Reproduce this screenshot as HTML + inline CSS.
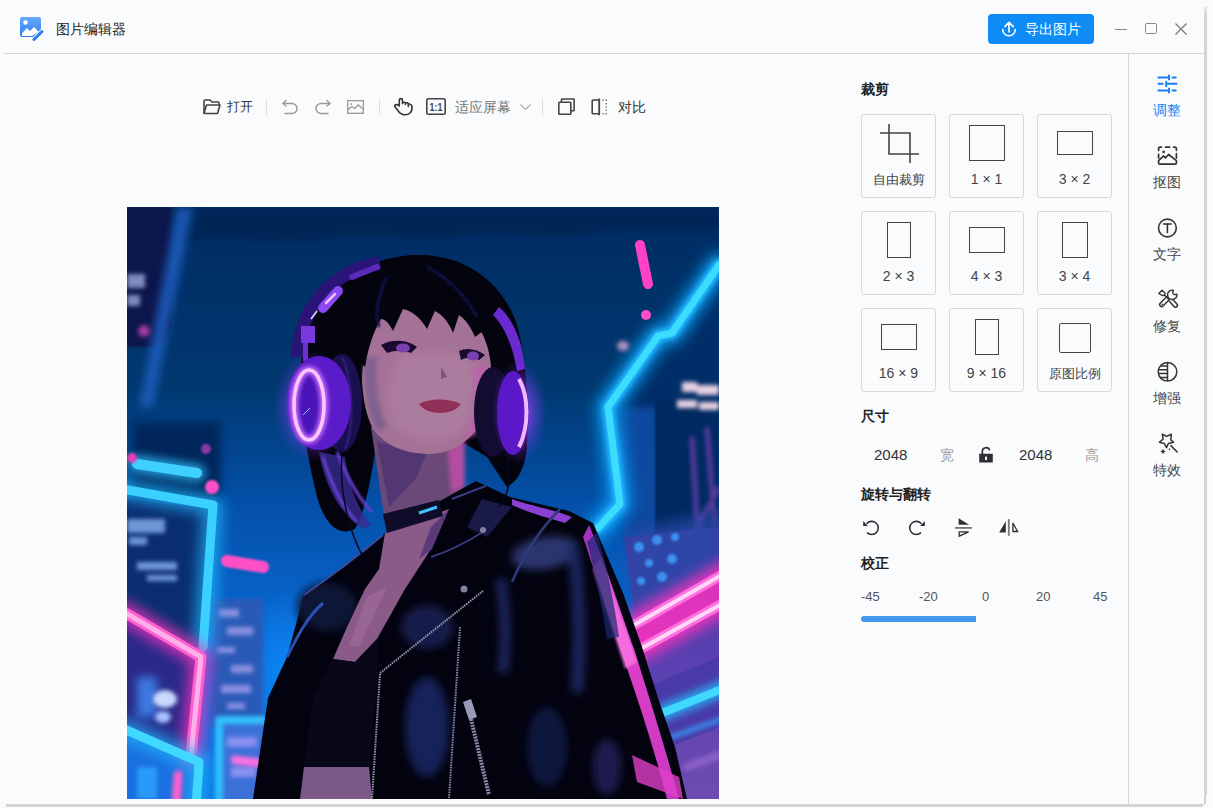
<!DOCTYPE html>
<html><head><meta charset="utf-8">
<style>
*{margin:0;padding:0;box-sizing:border-box}
html,body{width:1213px;height:808px;overflow:hidden;background:#f9fbfd;font-family:"Liberation Sans",sans-serif;color:#333}
.a{position:absolute}
.t{position:absolute;white-space:nowrap;line-height:1}
svg{position:absolute;overflow:visible}
.card{position:absolute;width:75px;height:84px;border:1px solid #d9dadc;border-radius:3px;background:#f9fbfd}
.lbl{position:absolute;left:0;width:73px;text-align:center;font-size:13px;line-height:1;color:#444;top:58px}
.sb{position:absolute;left:1129px;width:75px;text-align:center;font-size:14px;line-height:1;color:#444}
</style></head><body>
<!-- window shadow -->
<div class="a" style="left:1204px;top:7px;width:3px;height:6px;background:#e2e2e2"></div>
<div class="a" style="left:1204px;top:13px;width:3px;height:782px;background:#d3d3d3"></div>
<div class="a" style="left:1204px;top:795px;width:2px;height:9px;background:#d3d3d3"></div>
<div class="a" style="left:6px;top:804px;width:1196px;height:3px;background:#d3d3d3"></div>
<div class="a" style="left:1202px;top:804px;width:2px;height:2px;background:#dcdcdc"></div>
<div class="a" style="left:1207px;top:0;width:6px;height:808px;background:#f9fbfd"></div>
<!-- header -->
<div class="a" style="left:4px;top:53px;width:1200px;height:1px;background:#d5d5d6"></div>
<svg style="left:19px;top:16px" width="26" height="26" viewBox="0 0 26 26">
 <defs><linearGradient id="lg" x1="0" y1="0" x2="0" y2="1"><stop offset="0" stop-color="#6aaaf8"/><stop offset="1" stop-color="#2b7cf0"/></linearGradient></defs>
 <path d="M3 1h17a2 2 0 0 1 2 2v10l-8 8H3a2 2 0 0 1-2-2V3a2 2 0 0 1 2-2z" fill="url(#lg)"/>
 <circle cx="6.5" cy="6.5" r="2.2" fill="#fff"/>
 <path d="M3 17l5-5 3 3 4-4 4 4v1l-6 4H3z" fill="#fff"/>
 <path d="M15 23.5l8-8" stroke="#2b7cf0" stroke-width="3" stroke-linecap="round"/>
</svg>
<div class="t" style="left:56px;top:22px;font-size:14px;color:#222">图片编辑器</div>
<div class="a" style="left:988px;top:14px;width:106px;height:30px;background:#0f8bf6;border-radius:4px"></div>
<svg style="left:1002px;top:21px" width="14" height="16" viewBox="0 0 14 16" fill="none" stroke="#fff" stroke-width="1.6" stroke-linecap="round" stroke-linejoin="round">
 <path d="M0.7 8.5A6.3 6.3 0 0 0 13.3 8.5"/><path d="M7 11V1.5M2.8 5.6L7 1.4 11.2 5.6"/>
</svg>
<div class="t" style="left:1025px;top:22px;font-size:14px;color:#fff">导出图片</div>
<div class="a" style="left:1115px;top:28.5px;width:12px;height:1.4px;background:#8a8a8a"></div>
<div class="a" style="left:1145px;top:23px;width:12px;height:11px;border:1.4px solid #8a8a8a;border-radius:1.5px"></div>
<svg style="left:1175px;top:23px" width="12" height="12" viewBox="0 0 12 12" stroke="#7a7a7a" stroke-width="1.3"><path d="M0.5 0.5l11 11M11.5 0.5l-11 11"/></svg>

<!-- toolbar -->
<svg style="left:203px;top:99px" width="18" height="16" viewBox="0 0 18 16" fill="none" stroke="#444" stroke-width="1.6" stroke-linejoin="round">
 <path d="M1 14.5V2a1 1 0 0 1 1-1h5l2 2h6a1 1 0 0 1 1 1v2"/><path d="M1 14.5l2.5-8.5H17l-2.5 8.5z"/>
</svg>
<div class="t" style="left:227px;top:100px;font-size:13px;color:#333">打开</div>
<div class="a" style="left:266px;top:99px;width:1px;height:16px;background:#dcdcdc"></div>
<svg style="left:282px;top:100px" width="16" height="14" viewBox="0 0 16 14" fill="none" stroke="#999" stroke-width="1.4" stroke-linecap="round" stroke-linejoin="round">
 <path d="M3 13.5h7a5 5 0 0 0 0-10H1"/><path d="M4 0.5L1 3.5 4 6"/>
</svg>
<svg style="left:315px;top:100px" width="16" height="14" viewBox="0 0 16 14" fill="none" stroke="#999" stroke-width="1.4" stroke-linecap="round" stroke-linejoin="round">
 <path d="M13 13.5H6a5 5 0 0 1 0-10h9"/><path d="M12 0.5l3 3-3 2.5"/>
</svg>
<svg style="left:347px;top:100px" width="17" height="14" viewBox="0 0 17 14" fill="none" stroke="#999" stroke-width="1.3">
 <rect x="0.7" y="0.7" width="15.6" height="12.6"/><path d="M0.7 10l4-3.5 3 2 3.5-3.5 5.5 4.5"/><circle cx="4.3" cy="4" r="0.9" fill="#999" stroke="none"/>
</svg>
<div class="a" style="left:379px;top:99px;width:1px;height:16px;background:#dcdcdc"></div>
<svg style="left:390px;top:94px" width="26" height="26" viewBox="0 0 26 26" fill="none" stroke="#333" stroke-width="1.6" stroke-linecap="round" stroke-linejoin="round">
 <path d="M9.3 12V6.2a1.6 1.6 0 0 1 3.2 0V9.6M12.5 8.6c0.9-0.7 2.6-0.5 2.9 0.5V10.4M15.4 9c1-0.6 2.6-0.2 2.9 0.9V12.4M18.3 10.2c1.5-0.5 3.3 0.3 3.6 2.2c0.3 2.5 0.1 4.6-1.6 6.3c-1.8 1.8-4.4 2.3-6.7 2c-2.6-0.4-4.8-2.3-6.3-5L4.6 12.3c0-1.6 2.6-2.7 4.7-0.3"/>
</svg>
<svg style="left:426px;top:98px" width="20" height="17" viewBox="0 0 20 17" fill="none">
 <rect x="0.8" y="0.8" width="18.4" height="15.4" rx="1.5" stroke="#444" stroke-width="1.6"/>
 <text x="3.6" y="12.8" font-family="Liberation Sans" font-weight="bold" font-size="11" textLength="12.8" lengthAdjust="spacingAndGlyphs" fill="#444">1:1</text>
</svg>
<div class="t" style="left:455px;top:100px;font-size:14px;color:#777">适应屏幕</div>
<svg style="left:520px;top:104px" width="11" height="6" viewBox="0 0 11 6" fill="none" stroke="#aaa" stroke-width="1.1"><path d="M0.5 0.5l5 5 5-5"/></svg>
<div class="a" style="left:542px;top:99px;width:1px;height:16px;background:#dcdcdc"></div>
<svg style="left:557px;top:97px" width="19" height="19" viewBox="0 0 19 19" fill="none" stroke="#444" stroke-width="1.6" stroke-linejoin="round">
 <path d="M4.5 5V2.6a0.6 0.6 0 0 1 0.6-0.6h11.4a0.6 0.6 0 0 1 0.6 0.6v10.6a0.6 0.6 0 0 1-0.6 0.6H14"/>
 <rect x="1.8" y="5.2" width="12" height="12" rx="0.8"/>
</svg>
<svg style="left:590px;top:97px" width="20" height="20" viewBox="0 0 20 20" fill="none" stroke="#444" stroke-width="1.6">
 <path d="M9 3H3a0.8 0.8 0 0 0-0.8 0.8v12.1a0.8 0.8 0 0 0 0.8 0.8H9"/><path d="M9.2 1.5V18.3" stroke-width="1.8"/>
 <g fill="#555" stroke="none"><rect x="12.4" y="2.5" width="1.3" height="1.3"/><rect x="15.6" y="2.5" width="1.3" height="1.3"/><rect x="15.6" y="6" width="1.3" height="1.3"/><rect x="15.6" y="9.3" width="1.3" height="1.3"/><rect x="15.6" y="12.5" width="1.3" height="1.3"/><rect x="15.6" y="16.1" width="1.3" height="1.3"/><rect x="12.4" y="16.1" width="1.3" height="1.3"/></g>
</svg>
<div class="t" style="left:618px;top:100px;font-size:14px;color:#333">对比</div>

<!-- image placeholder -->
<div id="img" class="a" style="left:127px;top:207px;width:592px;height:592px;overflow:hidden"><svg style="left:0;top:0" width="592" height="592" viewBox="0 0 592 592">
<defs>
 <linearGradient id="bg" x1="0" y1="0" x2="0" y2="1">
  <stop offset="0" stop-color="#002c64"/>
  <stop offset="0.3" stop-color="#00386f"/>
  <stop offset="0.5" stop-color="#0450a8"/>
  <stop offset="0.75" stop-color="#0a6cd8"/>
  <stop offset="1" stop-color="#0a74e0"/>
 </linearGradient>
 <linearGradient id="pu" x1="0" y1="0" x2="0" y2="1">
  <stop offset="0" stop-color="#3a3aa0"/>
  <stop offset="0.5" stop-color="#5a40b0"/>
  <stop offset="1" stop-color="#6e4cb0"/>
 </linearGradient>
 <linearGradient id="sl" x1="0" y1="0" x2="0" y2="1">
  <stop offset="0" stop-color="#a030c0"/>
  <stop offset="0.4" stop-color="#e040c8"/>
  <stop offset="1" stop-color="#c838c0"/>
 </linearGradient>
 <radialGradient id="rb" cx="0.5" cy="0.5" r="0.5"><stop offset="0" stop-color="#0c88f8"/><stop offset="1" stop-color="#0c88f8" stop-opacity="0"/></radialGradient>
 <radialGradient id="rp" cx="0.5" cy="0.5" r="0.5"><stop offset="0" stop-color="#c050ff" stop-opacity="0.9"/><stop offset="1" stop-color="#8030ff" stop-opacity="0"/></radialGradient>
 <filter id="b1" filterUnits="userSpaceOnUse" x="-50" y="-50" width="700" height="700"><feGaussianBlur stdDeviation="1"/></filter>
 <filter id="b2" filterUnits="userSpaceOnUse" x="-50" y="-50" width="700" height="700"><feGaussianBlur stdDeviation="2"/></filter>
 <filter id="b4" filterUnits="userSpaceOnUse" x="-50" y="-50" width="700" height="700"><feGaussianBlur stdDeviation="4"/></filter>
 <filter id="b8" filterUnits="userSpaceOnUse" x="-50" y="-50" width="700" height="700"><feGaussianBlur stdDeviation="7"/></filter>
</defs>
<rect width="592" height="592" fill="url(#bg)"/>
<!-- top darker texture band -->
<path d="M0 0H592V22C540 30 500 18 460 28 420 36 380 20 330 30 290 38 250 22 200 32 150 40 100 26 60 34L0 36z" fill="#022556" filter="url(#b2)" opacity="0.9"/>
<!-- left dark building -->
<path d="M0 0H44V120L30 140H0z" fill="#0a124c" filter="url(#b1)"/>
<path d="M50 0h16L26 200H12z" fill="#1a5cbc" filter="url(#b4)" opacity="0.9"/>
<path d="M0 67h18v14H0zM0 88h13v11H0z" fill="#9aa8d8" filter="url(#b2)" opacity="0.8"/>
<circle cx="17" cy="124" r="6" fill="#9a3aa0" filter="url(#b2)"/>
<!-- bright blue lower center region -->
<ellipse cx="165" cy="470" rx="60" ry="90" fill="url(#rb)"/>
<!-- left city -->
<path d="M5 215H94V292H5z" fill="#02285c" filter="url(#b4)"/>
<path d="M0 292L86 302 78 400 76 440 0 440z" fill="#0a2e70"/>
<path d="M0 312h38v14H0zM2 330h18v8H2zM10 355h40v8H10zM20 368h30v6H20z" fill="#8ab0f0" filter="url(#b2)" opacity="0.8"/>
<path d="M0 410L74 452 64 548H0z" fill="#2a2a88"/>
<path d="M10 470h20v40H10z" fill="#3a78e0" filter="url(#b4)"/>
<ellipse cx="38" cy="492" rx="12" ry="9" fill="#c8d8ff" filter="url(#b2)"/>
<ellipse cx="36" cy="510" rx="8" ry="6" fill="#a8c0ff" filter="url(#b2)"/>
<path d="M0 525L72 558 69 592H0z" fill="#1a70e0"/>
<path d="M10 560h20v32H10z" fill="#2a9af8" filter="url(#b2)"/>
<path d="M84 392H136V520H84z" fill="#2a5ab8" filter="url(#b2)"/>
<path d="M92 402h20v8H92zM100 420h26v8h-26zM90 440h18v6H90zM104 458h22v8h-22zM94 478h30v8H94zM100 496h18v6h-18z" fill="#8a90e0" filter="url(#b2)"/>
<path d="M94 511H138V592H94z" fill="#3a70d8"/>
<path d="M100 530h30v10h-30zM104 560h25v10h-25z" fill="#8a90f0" filter="url(#b2)"/>
<!-- neon left -->
<g fill="none" stroke-linecap="round" stroke-linejoin="round">
 <path d="M10 257L70 266" stroke="#30c8ff" stroke-width="18" filter="url(#b4)" opacity="0.7"/>
 <path d="M10 257L70 266" stroke="#40d0ff" stroke-width="10"/>
 <path d="M-5 282L86 298 76 440" stroke="#20b8ff" stroke-width="20" filter="url(#b8)" opacity="0.7"/>
 <path d="M-5 282L86 298 76 440" stroke="#3ad0ff" stroke-width="9"/>
 <path d="M-5 404L74 450 64 548" stroke="#ff30c0" stroke-width="20" filter="url(#b8)" opacity="0.8"/>
 <path d="M-5 404L74 450 64 548" stroke="#ff60d0" stroke-width="11"/>
 <path d="M-5 404L74 450 64 548" stroke="#ffb0ec" stroke-width="5"/>
 <path d="M-5 521L72 555 69 600" stroke="#20b8ff" stroke-width="20" filter="url(#b8)" opacity="0.7"/>
 <path d="M-5 521L72 555 69 600" stroke="#40d8ff" stroke-width="9"/>
 <path d="M92 600V513H136" stroke="#30c0ff" stroke-width="8" filter="url(#b2)"/>
 <path d="M100 354L136 360" stroke="#ff50c8" stroke-width="12" filter="url(#b1)"/>
 <path d="M108 553L132 556" stroke="#ff70e0" stroke-width="9" filter="url(#b2)"/>
 <path d="M51 568L49 600" stroke="#ff60d0" stroke-width="9" filter="url(#b2)"/>
</g>
<circle cx="85" cy="280" r="7" fill="#ff50c8" filter="url(#b1)"/>
<circle cx="5" cy="251" r="5" fill="#e040b0" filter="url(#b1)"/>
<circle cx="79" cy="242" r="5" fill="#8a3aa8" filter="url(#b1)"/>
<!-- right city -->
<path d="M592 60L545 128 531 131 483 200 520 210 592 200z" fill="#032e68" filter="url(#b2)"/>
<path d="M493 200L531 200 531 330 497 330z" fill="#0848a0" filter="url(#b4)"/>
<path d="M528 195H592V345L528 360z" fill="#022a62" filter="url(#b1)"/>
<path d="M555 175h15v10h-15zM570 178h22v10h-22zM550 193h20v8h-20zM572 195h20v8h-20z" fill="#e8d0e0" filter="url(#b2)"/>
<path d="M565 230l6 100M580 220l8 100M592 280L560 340" stroke="#5a3aa0" stroke-width="5" filter="url(#b2)"/>
<path d="M497 330L592 320V592H540L515 450z" fill="url(#pu)"/>
<path d="M500 325L592 305V370L508 415z" fill="#2a48a8" filter="url(#b8)" opacity="0.8"/>
<g fill="#3a90f0" filter="url(#b1)"><circle cx="512" cy="340" r="5"/><circle cx="530" cy="333" r="5"/><circle cx="545" cy="352" r="5"/><circle cx="522" cy="356" r="4"/><circle cx="535" cy="370" r="5"/><circle cx="514" cy="374" r="4"/><circle cx="548" cy="330" r="4"/></g>
<path d="M520 480L592 450V520L530 545z" fill="#4a3aa8"/>
<g fill="none" stroke-linecap="round">
 <path d="M592 58L545 126 531 129 481 200 493 297 471 321" stroke="#10a8ff" stroke-width="24" filter="url(#b8)" opacity="0.8" stroke-linejoin="round"/>
 <path d="M592 58L545 126 531 129 481 200 493 297 471 321" stroke="#20b8ff" stroke-width="12" filter="url(#b2)" stroke-linejoin="round"/>
 <path d="M592 58L545 126 531 129 481 200 493 297 471 321" stroke="#3cdcff" stroke-width="7" stroke-linejoin="round"/>
 <path d="M513 38L521 77" stroke="#ff40c8" stroke-width="10"/>
 <path d="M500 422L600 365M506 446L600 394" stroke="#ff30c0" stroke-width="24" filter="url(#b8)" opacity="0.85"/>
 <path d="M500 422L600 365M506 446L600 394" stroke="#ff70e0" stroke-width="10"/>
 <path d="M500 422L600 365M506 446L600 394" stroke="#ffd8f8" stroke-width="4"/>
 <path d="M530 508L600 480" stroke="#20c0ff" stroke-width="16" filter="url(#b4)" opacity="0.8"/>
 <path d="M530 508L600 480" stroke="#40d8ff" stroke-width="8"/>
 <path d="M545 530L600 510" stroke="#3a80e0" stroke-width="6" filter="url(#b2)"/>
 <path d="M560 560L600 545" stroke="#8a60c8" stroke-width="8" filter="url(#b2)"/>
</g>
<circle cx="519" cy="108" r="5" fill="#ff50c8"/>
<ellipse cx="496" cy="139" rx="6" ry="5" fill="#b090c0" filter="url(#b2)"/>

<!-- hair back -->
<path d="M184 110C198 78 235 52 285 48C335 46 372 72 388 112C398 140 402 190 400 240C398 262 390 275 380 280L360 250 330 232 250 232C245 265 240 300 228 322 212 330 198 318 190 290 180 250 172 200 174 160 175 140 178 125 184 110z" fill="#04040f"/>
<path d="M192 245C198 280 212 305 236 322L244 318C230 300 222 280 218 250z" fill="#3a2a90" opacity="0.8"/>
<path d="M196 250C205 280 215 300 230 315M210 245C220 270 230 290 245 305" stroke="#6a40d0" stroke-width="3" fill="none" filter="url(#b1)"/>
<!-- neck -->
<path d="M244 220L334 226 336 290 258 316z" fill="#6a4878"/>
<path d="M320 236L338 232 338 280 324 286z" fill="#c050a8" filter="url(#b2)" opacity="0.85"/>
<path d="M250 235L300 245 290 270 262 300z" fill="#4a3070" opacity="0.7"/>
<!-- face -->
<path d="M250 112C240 125 236 150 235 172C236 195 240 210 246 222C258 238 275 246 300 247C325 247 340 235 350 222C360 205 366 185 364 160C362 135 352 112 330 100C305 92 270 98 250 112z" fill="#a47296"/>
<path d="M272 150C290 140 330 142 348 158C352 185 345 212 330 228C305 238 282 234 266 216C258 196 262 166 272 150z" fill="#ac7c9e" filter="url(#b4)"/>
<path d="M238 150C236 180 240 205 250 224L260 220C250 200 248 175 250 150z" fill="#806090" filter="url(#b2)"/>
<path d="M345 160C352 190 348 215 336 232L348 228C360 210 364 185 360 160z" fill="#c060b0" filter="url(#b2)" opacity="0.8"/>
<path d="M292 197c10-6 30-6 42 0c-8 12-34 12-42 0z" fill="#903058"/>
<path d="M254 138c10-6 26-6 36 2l-6 6c-8-3-16-3-24 0z" fill="#1a0a30"/>
<path d="M332 144c8-4 18-2 26 4l-6 5c-6-3-13-3-18 0z" fill="#1a0a30"/>
<ellipse cx="276" cy="141" rx="7" ry="4.5" fill="#7a40b0"/>
<ellipse cx="346" cy="149" rx="6" ry="4.5" fill="#7a40b0"/>
<path d="M314 160l6 10-6 2z" fill="#6a4070" opacity="0.7"/>
<!-- bangs -->
<path d="M188 112C205 75 245 50 290 48C340 48 375 75 388 120C392 140 390 160 385 175L372 176C370 160 364 140 356 124L348 130C344 120 338 112 332 108L326 126C322 116 316 108 308 104L300 122C294 112 286 104 276 102L266 124C262 116 258 112 254 112C248 122 242 136 238 160L228 150z" fill="#04040f"/>
<path d="M300 60C320 70 340 90 350 110M260 70C250 90 248 110 252 120" stroke="#12124a" stroke-width="3" fill="none" filter="url(#b1)"/>
<!-- left headphone -->
<path d="M170 150C172 115 190 85 215 70C228 62 240 58 253 56" stroke="#2a1478" stroke-width="13" fill="none"/>
<path d="M196 101L211 84" stroke="#8a48f0" stroke-width="10" stroke-linecap="round"/>
<path d="M199 96L208 87" stroke="#e8c0ff" stroke-width="2.5" stroke-linecap="round"/>
<path d="M225 70L250 60" stroke="#5a2ab8" stroke-width="6" stroke-linecap="round"/>
<rect x="174" y="119" width="14" height="17" fill="#7a38e0"/>
<rect x="176" y="136" width="5" height="18" fill="#6a30d0"/>
<path d="M184 112L190 104" stroke="#e0e0ff" stroke-width="1.5"/>
<ellipse cx="215" cy="196" rx="20" ry="49" fill="#1a1050"/>
<path d="M215 150C225 170 228 220 218 242" stroke="#2a1a70" stroke-width="3" fill="none"/>
<ellipse cx="184" cy="199" rx="38" ry="56" fill="url(#rp)"/>
<ellipse cx="192" cy="196" rx="32" ry="47" fill="#5a1cc8"/>
<ellipse cx="182" cy="198" rx="15" ry="35" fill="#4a14b8"/>
<ellipse cx="182" cy="198" rx="15" ry="35" fill="none" stroke="#d070ff" stroke-width="8" filter="url(#b2)"/>
<ellipse cx="182" cy="198" rx="15" ry="35" fill="none" stroke="#f8c8ff" stroke-width="3.5"/>
<path d="M176 208L183 201" stroke="#80d0ff" stroke-width="1"/>
<!-- right headphone -->
<path d="M372 100C386 112 396 135 398 162L390 164C386 140 378 120 366 108z" fill="#6a2ad0"/>
<ellipse cx="366" cy="205" rx="19" ry="45" fill="#110c30"/>
<ellipse cx="392" cy="205" rx="28" ry="52" fill="url(#rp)"/>
<ellipse cx="386" cy="206" rx="16" ry="42" fill="#5a18c8"/>
<path d="M392 172C402 190 402 220 392 240" stroke="#f0b8ff" stroke-width="4" fill="none"/>
<!-- jacket -->
<path d="M126 592L141 491 160 450 177 388 200 372 232 348 258 326 304 299 349 274 383 290 442 304 466 316 496 386 515 440 531 491 548 540 560 592z" fill="#03030f"/>
<!-- sleeve pink -->
<path d="M462 318C476 350 492 400 508 445C522 490 538 540 552 592H540C528 545 512 495 496 450 482 410 468 365 456 330z" fill="url(#sl)"/>
<path d="M474 350C486 385 498 420 510 455L498 462C488 430 476 395 466 362z" fill="#ff80e8" opacity="0.7" filter="url(#b1)"/>
<path d="M505 548L552 570 556 592 510 575z" fill="#e040c8" opacity="0.8"/>
<path d="M470 325C480 360 488 400 492 430L480 432C475 400 468 365 460 335z" fill="#1a2a70" opacity="0.7"/>
<!-- shoulder highlight -->
<path d="M385 292C400 298 425 302 445 310L438 316C418 310 400 305 385 298z" fill="#8a40d0"/>
<path d="M355 292L385 300 360 330 340 320z" fill="#1a1a48"/>
<!-- leather shine -->
<g filter="url(#b4)">
 <ellipse cx="418" cy="346" rx="34" ry="16" fill="#2a3470" transform="rotate(-10 418 346)"/>
 <path d="M446 340C452 380 454 430 450 485" stroke="#1c2660" stroke-width="12" fill="none"/>
 <path d="M374 372C378 400 380 430 376 466" stroke="#1c2660" stroke-width="10" fill="none"/>
 <ellipse cx="300" cy="520" rx="22" ry="50" fill="#18245a"/>
 <ellipse cx="300" cy="420" rx="26" ry="22" fill="#141c48"/>
 <ellipse cx="200" cy="400" rx="30" ry="24" fill="#0e1436"/>
 <ellipse cx="420" cy="540" rx="20" ry="40" fill="#10183e"/>
 <ellipse cx="480" cy="560" rx="14" ry="28" fill="#1a1a50"/>
</g>
<path d="M304 350C320 345 340 335 356 325M325 292C335 288 350 282 359 279 372 286 382 292" stroke="#3a3a80" stroke-width="2" fill="none"/>
<path d="M433 302C415 320 398 345 385 375" stroke="#303a78" stroke-width="2.5" fill="none"/>
<path d="M177 388C200 372 230 350 256 328" stroke="#3a4a9a" stroke-width="2" fill="none"/>
<path d="M160 450C170 430 180 410 196 396" stroke="#2a50b0" stroke-width="3" fill="none"/>
<circle cx="356" cy="323" r="3" fill="#8080a0"/>
<circle cx="337" cy="382" r="3.5" fill="#8080a0"/>
<!-- skin chest -->
<path d="M258 326L322 302 304 342 278 382 250 432 228 455 206 452 220 420 238 382 252 362z" fill="#8a5a88"/>
<path d="M304 320L322 302 305 342 292 352z" fill="#5a3a78"/>
<path d="M240 390L260 380 232 440 222 438z" fill="#a06a98" opacity="0.7"/>
<!-- black top -->
<path d="M206 452L228 455 250 432 250 476 242 560H177L186 490z" fill="#090818"/>
<!-- midriff -->
<path d="M177 560H242L245 592H173z" fill="#7a5888"/>
<!-- zipper lines -->
<path d="M356 384L253 466 245 592" stroke="#9a9ab0" stroke-width="2" stroke-dasharray="1.5 1" fill="none"/>
<path d="M333 420L322 592" stroke="#8a8aa8" stroke-width="2" stroke-dasharray="1.5 1" fill="none"/>
<path d="M336 495l8-3 6 18-8 3z" fill="#9a9ab8"/>
<path d="M344 512L362 588" stroke="#8a8aa8" stroke-width="4" stroke-dasharray="2 1" fill="none"/>
<!-- choker -->
<path d="M256 307L312 293 316 309 260 326z" fill="#0e0c28"/>
<path d="M292 306L310 300" stroke="#40c0ff" stroke-width="3"/>
<!-- headphone cord -->
<path d="M215 245C212 280 220 320 236 350M380 250C386 275 380 290 372 300" stroke="#080820" stroke-width="1.5" fill="none"/>
</svg>
</div>

<!-- right panel -->
<div class="a" style="left:1128px;top:54px;width:1px;height:750px;background:#d5d5d6"></div>
<div class="t" style="left:861px;top:82px;font-size:14px;font-weight:bold;color:#222">裁剪</div>
<div class="card" style="left:861px;top:114px"><svg style="left:18px;top:9px" width="39" height="39" viewBox="0 0 39 39" fill="none" stroke="#444" stroke-width="1.6"><path d="M0 9H30V39M9 0V30H39"/></svg><div class="lbl">自由裁剪</div></div>
<div class="card" style="left:949px;top:114px"><div class="a" style="left:19px;top:10px;width:36px;height:36px;border:1.5px solid #444"></div><div class="lbl" style="font-size:14px;top:57px">1 × 1</div></div>
<div class="card" style="left:1037px;top:114px"><div class="a" style="left:19px;top:16px;width:36px;height:24px;border:1.5px solid #444"></div><div class="lbl" style="font-size:14px;top:57px">3 × 2</div></div>
<div class="card" style="left:861px;top:211px"><div class="a" style="left:25px;top:10px;width:24px;height:36px;border:1.5px solid #444"></div><div class="lbl" style="font-size:14px;top:57px">2 × 3</div></div>
<div class="card" style="left:949px;top:211px"><div class="a" style="left:19px;top:15px;width:36px;height:26px;border:1.5px solid #444"></div><div class="lbl" style="font-size:14px;top:57px">4 × 3</div></div>
<div class="card" style="left:1037px;top:211px"><div class="a" style="left:24px;top:10px;width:26px;height:36px;border:1.5px solid #444"></div><div class="lbl" style="font-size:14px;top:57px">3 × 4</div></div>
<div class="card" style="left:861px;top:308px"><div class="a" style="left:19px;top:15px;width:36px;height:26px;border:1.5px solid #444"></div><div class="lbl" style="font-size:14px;top:57px">16 × 9</div></div>
<div class="card" style="left:949px;top:308px"><div class="a" style="left:25px;top:10px;width:24px;height:36px;border:1.5px solid #444"></div><div class="lbl" style="font-size:14px;top:57px">9 × 16</div></div>
<div class="card" style="left:1037px;top:308px"><div class="a" style="left:21px;top:14px;width:32px;height:30px;border:1.5px solid #444;border-radius:2px"></div><div class="lbl">原图比例</div></div>

<div class="t" style="left:861px;top:409px;font-size:14px;font-weight:bold;color:#222">尺寸</div>
<div class="t" style="left:874px;top:447px;font-size:15px;color:#333">2048</div>
<div class="t" style="left:940px;top:448px;font-size:14px;color:#999">宽</div>
<svg style="left:979px;top:447px" width="15" height="16" viewBox="0 0 15 16"><path d="M3.3 7V4.6a3.8 3.8 0 0 1 7.4-1.3" fill="none" stroke="#2f2f33" stroke-width="1.7"/><rect x="0.2" y="6.7" width="13.6" height="8.9" rx="0.5" fill="#2f2f33"/><rect x="6" y="9.6" width="2" height="3.4" fill="#fff"/></svg>
<div class="t" style="left:1019px;top:447px;font-size:15px;color:#333">2048</div>
<div class="t" style="left:1085px;top:448px;font-size:14px;color:#999">高</div>

<div class="t" style="left:861px;top:487px;font-size:14px;font-weight:bold;color:#222">旋转与翻转</div>
<svg style="left:860px;top:516px" width="24" height="24" viewBox="0 0 24 24"><path d="M7 16.6A6.6 6.6 0 1 0 6.6 7.7" fill="none" stroke="#2f2f33" stroke-width="1.6"/><path d="M3.2 4.9V9.9H7.9z" fill="#2f2f33"/></svg>
<svg style="left:904px;top:516px;transform:scaleX(-1)" width="24" height="24" viewBox="0 0 24 24"><path d="M7 16.6A6.6 6.6 0 1 0 6.6 7.7" fill="none" stroke="#2f2f33" stroke-width="1.6"/><path d="M3.2 4.9V9.9H7.9z" fill="#2f2f33"/></svg>
<svg style="left:950px;top:514px" width="30" height="28" viewBox="0 0 30 28"><path d="M8.6 4.3V10.8H19.2z" fill="#2f2f33"/><path d="M5 13.9H22" stroke="#777" stroke-width="1.8"/><path d="M9.2 17.8H18.6L9.2 22.2z" fill="none" stroke="#2f2f33" stroke-width="1.3" stroke-linejoin="miter"/></svg>
<svg style="left:995px;top:514px" width="30" height="28" viewBox="0 0 30 28"><path d="M10.8 7.3V18.5H4.2z" fill="#2f2f33"/><path d="M13.8 5.2V21.8" stroke="#777" stroke-width="1.8"/><path d="M17.9 9V17.5H22.6z" fill="none" stroke="#2f2f33" stroke-width="1.3"/></svg>

<div class="t" style="left:861px;top:556px;font-size:14px;font-weight:bold;color:#222">校正</div>
<div class="t" style="left:861px;top:590px;font-size:13px;color:#555">-45</div>
<div class="t" style="left:919px;top:590px;font-size:13px;color:#555">-20</div>
<div class="t" style="left:982px;top:590px;font-size:13px;color:#555">0</div>
<div class="t" style="left:1036px;top:590px;font-size:13px;color:#555">20</div>
<div class="t" style="left:1093px;top:590px;font-size:13px;color:#555">45</div>
<div class="a" style="left:861px;top:616px;width:115px;height:6px;background:#4597ee;border-radius:3px 0 0 3px"></div>

<!-- sidebar -->
<svg style="left:1150px;top:66px" width="35" height="35" viewBox="0 0 35 35" fill="none" stroke="#1a7ff0" stroke-width="2" stroke-linecap="round">
 <path d="M8.4 11.5H19M22.5 11.5H25.8M19 9.5V13.6M8.4 17.8H12.8M16.2 15.8V20.2M16.2 17.8H26.6M8.4 24.5H19M22.5 24.5H25.8M19 22.4V26.5"/>
</svg>
<div class="sb" style="top:103px;color:#1f80f0">调整</div>
<svg style="left:1150px;top:138px" width="35" height="35" viewBox="0 0 35 35" fill="none" stroke="#333" stroke-width="1.7" stroke-linecap="round" stroke-linejoin="round">
 <path d="M8.6 12.3V10.6a1.5 1.5 0 0 1 1.5-1.5H11.5M15.6 9.1H19.6M23.6 9.1H24.9a1.5 1.5 0 0 1 1.5 1.5V12.3M8.6 16.3V20M26.4 15.5V20"/>
 <path d="M8.6 22.6L13.4 18 15.4 19.8 18.6 16.5 26.4 22.6V24.8a1.4 1.4 0 0 1-1.4 1.4H10a1.4 1.4 0 0 1-1.4-1.4z"/>
 <circle cx="13.6" cy="13.9" r="1.3" fill="#333" stroke="none"/>
</svg>
<div class="sb" style="top:175px">抠图</div>
<svg style="left:1150px;top:210px" width="35" height="35" viewBox="0 0 35 35" fill="none" stroke="#333" stroke-width="1.6" stroke-linecap="round">
 <circle cx="17.4" cy="18" r="8.9"/><path d="M13.6 14H21.2M17.4 14V22.6"/>
</svg>
<div class="sb" style="top:247px">文字</div>
<svg style="left:1150px;top:280px" width="35" height="35" viewBox="0 0 35 35" fill="none" stroke-linecap="round" stroke-linejoin="round">
 <path d="M18.3 17.8L11.6 24.6" stroke="#333" stroke-width="5.4"/>
 <path d="M18.3 17.8L11.6 24.6" stroke="#f9fbfd" stroke-width="2.4"/>
 <path d="M20.6 19.8L25.4 25.2" stroke="#333" stroke-width="5.4"/>
 <path d="M20.6 19.8L25.4 25.2" stroke="#f9fbfd" stroke-width="2.4"/>
 <circle cx="12.3" cy="24.4" r="0.8" fill="#333"/>
 <path d="M8.8 13.4L12.1 10.2 15.1 13.2 14.6 15.3 12.2 15.5z" fill="#f9fbfd" stroke="#333" stroke-width="1.4"/>
 <path d="M14.6 15.3L17.6 18.3" stroke="#333" stroke-width="1.4"/>
 <path d="M23.5 10.3A4.7 4.7 0 1 0 26.9 14.3L24.4 14.6A2.3 2.3 0 0 1 22.6 12.5z" fill="#f9fbfd" stroke="#333" stroke-width="1.4"/>
</svg>
<div class="sb" style="top:319px">修复</div>
<svg style="left:1150px;top:355px" width="35" height="35" viewBox="0 0 35 35" fill="none" stroke="#333" stroke-width="1.5">
 <circle cx="17.5" cy="16.8" r="9.3"/><path d="M17.5 7.5V26.1M10.8 11H17.5M8.6 14.7H17.5M8.6 18.6H17.5M10.3 22.5H17.5"/>
</svg>
<div class="sb" style="top:391px">增强</div>
<svg style="left:1150px;top:427px" width="35" height="35" viewBox="0 0 35 35" fill="none" stroke="#333" stroke-width="1.5" stroke-linejoin="round" stroke-linecap="round">
 <path d="M12.3 7.3L16.7 9.4 21.3 7.3 20.8 12.9 23.6 15.3 18.3 16.6 16.5 20.6 14.2 16.4 9.4 15.3 13.1 12.1z"/>
 <path d="M20.8 18.6L27.2 25"/>
 <path d="M13 21.8l0.9 1.8 1.8 0.9-1.8 0.9-0.9 1.8-0.9-1.8-1.8-0.9 1.8-0.9z" fill="#333" stroke="none"/>
 <path d="M19.5 21.3l1 1-1 1-1-1z" fill="#333" stroke="none"/>
</svg>
<div class="sb" style="top:463px">特效</div>
</body></html>
